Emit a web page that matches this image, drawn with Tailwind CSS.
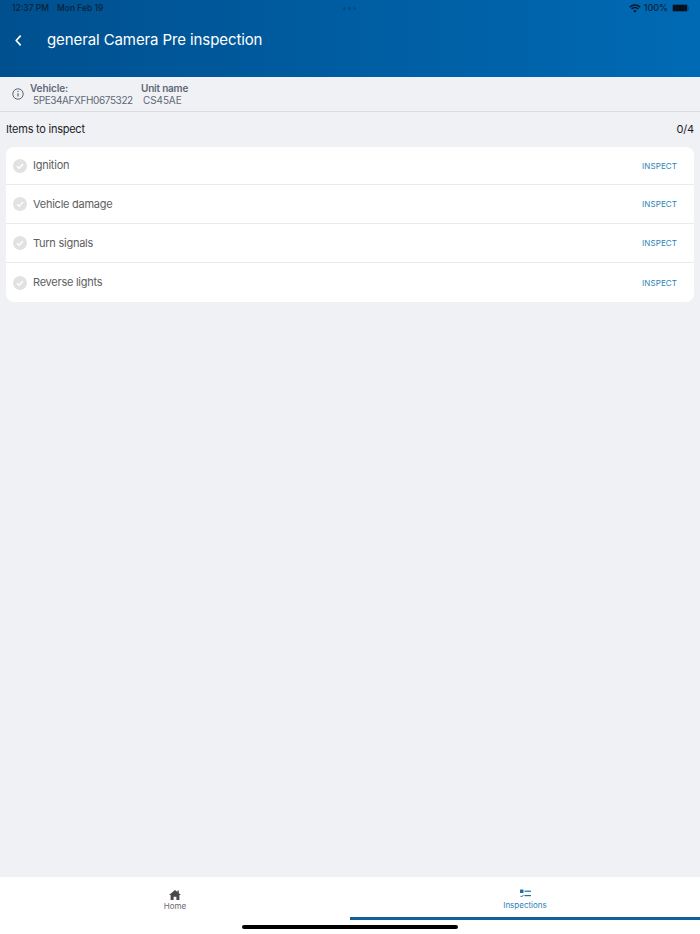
<!doctype html>
<html>
<head>
  <meta charset="UTF-8">
  <meta name="viewport" content="width=device-width, initial-scale=1.0">
  <script src="https://cdn.jsdelivr.net/npm/@tailwindcss/browser@4"></script>
</head>
<body class="font-['Inter',sans-serif]">
  <div class="flex flex-col h-[934px] w-[700px] bg-[#f0f1f5] overflow-hidden">

    <!-- header -->
    <div class="h-[77px] shrink-0 bg-gradient-to-r from-[#00508f] to-[#006ab4] text-white">
      <div class="flex items-center justify-between h-[16px] pl-[12px] pr-[11px] text-[8.5px] font-medium text-[#0b2238] mb-[6px] relative">
        <div class="flex gap-[8px]"><span>12:37 PM</span><span>Mon Feb 19</span></div>
        <div class="absolute left-[343px] top-[7px] flex gap-[2px]">
          <div class="w-[3px] h-[3px] rounded-full bg-[#0b2238]/30"></div>
          <div class="w-[3px] h-[3px] rounded-full bg-[#0b2238]/30"></div>
          <div class="w-[3px] h-[3px] rounded-full bg-[#0b2238]/30"></div>
        </div>
        <div class="flex items-center gap-[3px]">
          <svg width="12" height="9" viewBox="0 0 12 9" fill="none" stroke="#06182b" stroke-width="1.5"><path d="M.8 3.2a7.4 7.4 0 0 1 10.4 0"/><path d="M2.6 5a4.8 4.8 0 0 1 6.8 0"/><path d="M6 8.8 4.3 6.8a2.4 2.4 0 0 1 3.4 0z" fill="#06182b" stroke="none"/></svg>
          <span class="text-[9px]">100%</span>
          <div class="flex items-center ml-[1px]">
            <div class="w-[16px] h-[8px] rounded-[2px] bg-[#06121f] border border-[#0b4a80]"></div>
            <div class="w-[1px] h-[3px] bg-[#0b4a80]"></div>
          </div>
        </div>
      </div>
      <div class="flex items-center h-[36px]">
        <div class="w-[47px] pl-[15px]">
          <svg width="7" height="11" viewBox="0 0 7 11" fill="none" stroke="white" stroke-width="1.7" stroke-linecap="round" stroke-linejoin="round"><path d="M5.2 1.2 1.2 5.5l4 4.3"/></svg>
        </div>
        <div class="text-[15px] leading-[20px] tracking-[-0.1px]">general Camera Pre inspection</div>
      </div>
    </div>

    <!-- vehicle info -->
    <div class="flex items-center h-[35px] shrink-0 border-b border-[#dcdde0] pl-[12px]">
      <svg width="12" height="12" viewBox="0 0 12 12" fill="none" stroke="#5b6472" stroke-width="1"><circle cx="6" cy="6" r="5.2"/><path d="M6 5.3v3.2" stroke-width="1.2"/><circle cx="6" cy="3.4" r=".7" fill="#5b6472" stroke="none"/></svg>
      <div class="ml-[6px] w-[111px]">
        <div class="text-[10px] leading-[12px] font-semibold tracking-[-0.1px] text-[#5f6875]">Vehicle:</div>
        <div class="text-[10px] leading-[12px] pl-[3px] tracking-[-0.4px] text-[#5f6875]">5PE34AFXFH0675322</div>
      </div>
      <div>
        <div class="text-[10px] leading-[12px] font-semibold tracking-[-0.2px] text-[#5f6875]">Unit name</div>
        <div class="text-[10px] leading-[12px] pl-[2px] tracking-[-0.1px] text-[#5f6875]">CS45AE</div>
      </div>
    </div>

    <!-- items -->
    <div class="flex-1 px-[6px]">
      <div class="flex items-center justify-between h-[35px] text-[11px] text-[#1c1c1e]">
        <span class="tracking-[-0.25px]">Items to inspect</span>
        <span class="tracking-[-0.2px]">0/4</span>
      </div>
      <div class="bg-white rounded-[8px] divide-y divide-[#ebebee]">
        <div class="flex items-center h-[38px] pl-[7px] pr-[17px]">
          <svg width="14" height="14" viewBox="0 0 14 14"><circle cx="7" cy="7" r="7" fill="#e2e2e4"/><path d="M4 7.2 6.1 9.3 10 5" fill="none" stroke="white" stroke-width="1.4"/></svg>
          <span class="ml-[6px] text-[11px] tracking-[-0.25px] text-[#5e5e62]">Ignition</span>
          <span class="ml-auto text-[8px] tracking-[0.1px] text-[#2a82b8]">INSPECT</span>
        </div>
        <div class="flex items-center h-[39px] pl-[7px] pr-[17px]">
          <svg width="14" height="14" viewBox="0 0 14 14"><circle cx="7" cy="7" r="7" fill="#e2e2e4"/><path d="M4 7.2 6.1 9.3 10 5" fill="none" stroke="white" stroke-width="1.4"/></svg>
          <span class="ml-[6px] text-[11px] tracking-[-0.25px] text-[#5e5e62]">Vehicle damage</span>
          <span class="ml-auto text-[8px] tracking-[0.1px] text-[#2a82b8]">INSPECT</span>
        </div>
        <div class="flex items-center h-[39px] pl-[7px] pr-[17px]">
          <svg width="14" height="14" viewBox="0 0 14 14"><circle cx="7" cy="7" r="7" fill="#e2e2e4"/><path d="M4 7.2 6.1 9.3 10 5" fill="none" stroke="white" stroke-width="1.4"/></svg>
          <span class="ml-[6px] text-[11px] tracking-[-0.25px] text-[#5e5e62]">Turn signals</span>
          <span class="ml-auto text-[8px] tracking-[0.1px] text-[#2a82b8]">INSPECT</span>
        </div>
        <div class="flex items-center h-[39px] pl-[7px] pr-[17px]">
          <svg width="14" height="14" viewBox="0 0 14 14"><circle cx="7" cy="7" r="7" fill="#e2e2e4"/><path d="M4 7.2 6.1 9.3 10 5" fill="none" stroke="white" stroke-width="1.4"/></svg>
          <span class="ml-[6px] text-[11px] tracking-[-0.25px] text-[#5e5e62]">Reverse lights</span>
          <span class="ml-auto text-[8px] tracking-[0.1px] text-[#2a82b8]">INSPECT</span>
        </div>
      </div>
    </div>

    <!-- tab bar -->
    <div class="relative h-[57px] shrink-0 bg-white grid grid-cols-2">
      <div class="flex flex-col items-center pt-[13px] h-[40px]">
        <svg width="12" height="10" viewBox="0 0 12 10" fill="#4a4a4e"><path d="M6 0 0 5h1.6v5h3V6.8h2.8V10h3V5H12L9.8 3.2V.6H8.4V2z"/></svg>
        <span class="text-[8px] leading-[10px] mt-[1px] text-[#6a6a6e]">Home</span>
      </div>
      <div class="flex flex-col items-center pt-[12px] h-[43px] border-b-[3px] border-[#0f6299]">
        <svg width="11" height="10" viewBox="0 0 11 10" fill="#1f6ea6"><rect x="0" y="0.5" width="3.5" height="3.5" rx=".5"/><path d="M.4 6.8 1.6 8l2-2.2" fill="none" stroke="#1f6ea6" stroke-width="1"/><rect x="4.5" y="1.6" width="6.5" height="1.2"/><rect x="4.5" y="6" width="6.5" height="1.2"/></svg>
        <span class="text-[8px] leading-[10px] mt-[1px] text-[#2a7fb8]">Inspections</span>
      </div>
      <div class="absolute left-[242px] top-[48px] w-[216px] h-[4px] rounded-full bg-black"></div>
    </div>

  </div>
</body>
</html>
